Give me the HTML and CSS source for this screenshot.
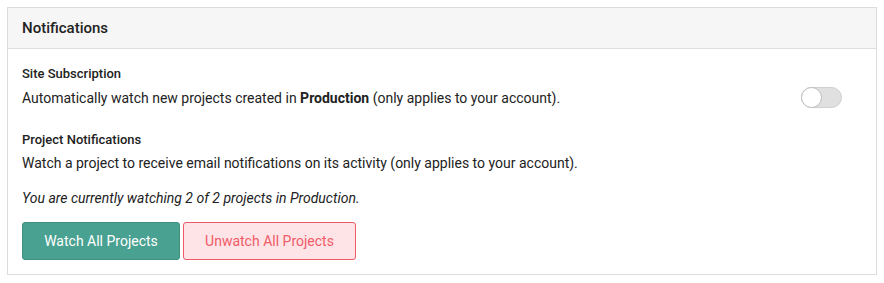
FILE: index.html
```html
<!DOCTYPE html>
<html>
<head>
<meta charset="utf-8">
<link rel="stylesheet" href="styles.css">
</head>
<body>
<div class="card">
  <div class="card-header">Notifications</div>
  <div class="card-body">
    <div class="setting">
      <div class="setting-text">
        <div class="label">Site Subscription</div>
        <div class="desc">Automatically watch new projects created in <strong>Production</strong> (only applies to your account).</div>
      </div>
      <div class="toggle"><span class="knob"></span></div>
    </div>
    <div class="section">
      <div class="label">Project Notifications</div>
      <div class="desc desc-tight">Watch a project to receive email notifications on its activity (only applies to your account).</div>
    </div>
    <p class="status">You are currently watching 2 of 2 projects in Production.</p>
    <div class="actions">
      <button class="btn btn-watch">Watch All Projects</button>
      <button class="btn btn-unwatch">Unwatch All Projects</button>
    </div>
  </div>
</div>
</body>
</html>
```
FILE: styles.css
```css
html, body { margin: 0; padding: 0; background: #fff; }
body {
  padding: 7px 7px;
  font-family: Roboto, "Liberation Sans", sans-serif;
  color: #212529;
}
.card {
  border: 1px solid #dcdcdc;
  background: #fff;
}
.card-header {
  height: 41px;
  box-sizing: border-box;
  background: #f6f6f6;
  border-bottom: 1px solid #dedede;
  padding: 0 14px;
  display: flex;
  align-items: center;
  font-size: 15px;
  font-weight: 500;
  color: #222;
}
.card-body {
  padding: 15px 14px 14px 14px;
}
.setting {
  display: flex;
  align-items: flex-end;
  justify-content: space-between;
}
.label {
  font-size: 13px;
  font-weight: 500;
  line-height: 20px;
  color: #222;
}
.desc {
  font-size: 14px;
  line-height: 20px;
  margin-top: 4px;
  color: #222;
}
.desc-tight { margin-top: 3px; }
.desc strong { font-weight: 700; }
.toggle {
  width: 41px;
  height: 21px;
  border-radius: 11px;
  border: 1px solid #cfcfcf;
  background: #e0e0e0;
  position: relative;
  margin-right: 20px;
  margin-bottom: 0px;
  box-sizing: border-box;
}
.knob {
  position: absolute;
  left: -1px;
  top: -1px;
  width: 21px;
  height: 21px;
  border-radius: 50%;
  background: #fff;
  border: 1px solid #bdbdbd;
  box-sizing: border-box;
}
.section { margin-top: 22px; }
.status {
  margin: 15px 0 0;
  font-size: 14px;
  line-height: 20px;
  font-style: italic;
  color: #222;
}
.actions {
  display: flex;
  gap: 3px;
  margin-top: 14px;
}
.btn {
  height: 38px;
  box-sizing: border-box;
  border-radius: 3px;
  font-family: Roboto, "Liberation Sans", sans-serif;
  font-size: 14px;
  padding: 0 21px;
  cursor: pointer;
}
.btn-watch {
  background: #48a191;
  border: 1px solid #3f9080;
  color: #fff;
  width: 158px;
}
.btn-unwatch {
  background: #fee4e6;
  border: 1px solid #f05a66;
  color: #ef5b68;
  width: 173px;
}
```
